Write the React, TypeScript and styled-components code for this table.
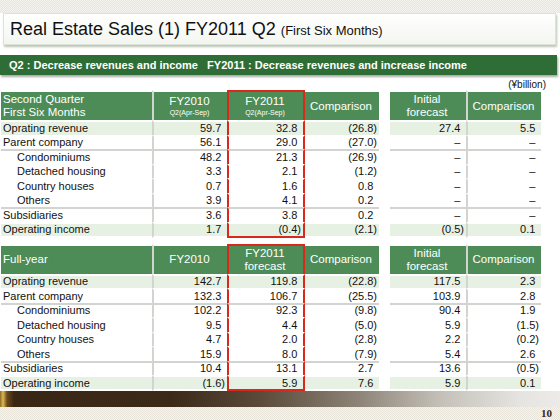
import React from "react";
import styled, { createGlobalStyle } from "styled-components";

const Global = createGlobalStyle`
  html, body { margin: 0; padding: 0; background: #fff; }
  body { font-family: "Liberation Sans", Arial, sans-serif; color: #111; }
`;

const Page = styled.div`
  width: 560px;
  height: 420px;
  overflow: hidden;
  display: flex;
  flex-direction: column;
  background: #fff;
`;

const Checker = styled.div<{ $h: number }>`
  height: ${(p) => p.$h}px;
  flex: none;
  background: repeating-conic-gradient(#e9e5da 0 25%, #f5f3ed 0 50%) 0 0 / 2px 2px;
  display: flex;
  justify-content: flex-end;
  align-items: center;
`;

const PageNum = styled.span`
  font-family: "Liberation Serif", "Times New Roman", serif;
  font-weight: bold;
  font-size: 11px;
  line-height: 11px;
  color: #3d2410;
  margin-right: 8px;
`;

const TitleBox = styled.div`
  margin: 0 4px 0 3px;
  height: 32px;
  flex: none;
  box-sizing: border-box;
  border: 1px solid #dde3d8;
  background: linear-gradient(#ffffff, #f3f6f0);
  box-shadow: 1px 2px 2px rgba(130, 150, 120, 0.55);
  display: flex;
  align-items: center;
  padding-left: 6px;
  gap: 5px;
`;

const TitleMain = styled.span`
  font-size: 18px;
  color: #111;
  transform-origin: left center;
`;

const TitleSub = styled.span`
  font-size: 13px;
  color: #111;
  margin-top: 3px;
`;

const GreenBar = styled.div`
  margin: 10px 3px 0 0;
  height: 20px;
  flex: none;
  background: #2f6d37;
  box-shadow: 1px 2px 2px rgba(110, 110, 110, 0.6);
  color: #fff;
  font-size: 11px;
  font-weight: bold;
  display: flex;
  align-items: center;
  padding-left: 9px;
`;

const Unit = styled.div`
  height: 15px;
  flex: none;
  font-size: 10px;
  text-align: right;
  padding-right: 14px;
  line-height: 20px;
`;

const Section = styled.div<{ $mt: number }>`
  display: flex;
  gap: 11px;
  margin-top: ${(p) => p.$mt}px;
  padding-left: 1px;
  flex: none;
`;

const Grid = styled.div<{ $cols: string }>`
  display: grid;
  grid-template-columns: ${(p) => p.$cols};
  grid-template-rows: 30px repeat(7, 14.5px) 16px;
`;

const GREY = "#d2d4d0";
const RED = "#d9291c";

const Cell = styled.div<{
  $head?: boolean;
  $green?: boolean;
  $left?: boolean;
  $indent?: boolean;
  $first?: boolean;
  $red?: boolean;
  $afterRed?: boolean;
  $lineTop?: boolean;
  $last?: boolean;
}>`
  box-sizing: border-box;
  background-clip: padding-box;
  background-color: ${(p) => (p.$head ? "#4e8c57" : p.$green ? "#e7f1e3" : "#fff")};
  color: ${(p) => (p.$head ? "#fff" : "#111")};
  font-size: ${(p) => (p.$head ? "11.5px" : "11px")};
  display: flex;
  flex-direction: column;
  justify-content: center;
  align-items: ${(p) => (p.$head ? (p.$left ? "flex-start" : "center") : p.$left ? "flex-start" : "flex-end")};
  text-align: ${(p) => (p.$head && !p.$left ? "center" : "left")};
  line-height: ${(p) => (p.$head ? "13px" : "13px")};
  padding: ${(p) => (p.$left ? (p.$indent ? "0 0 0 16px" : "0 0 0 2px") : "0 2px 0 0")};
  border-left: ${(p) => (p.$first || p.$afterRed ? "0" : `2px solid ${p.$red ? RED : GREY}`)};
  border-right: ${(p) => (p.$red ? `2px solid ${RED}` : "0")};
  border-top: 2px solid
    ${(p) => (p.$head ? (p.$red ? RED : "transparent") : p.$lineTop ? GREY : "transparent")};
  border-bottom: ${(p) => (p.$last ? `2px solid ${p.$red ? RED : "transparent"}` : "0")};
  white-space: nowrap;
`;

const SubHead = styled.span`
  font-size: 7px;
  line-height: 9px;
`;

const Ghost = styled.span`
  visibility: hidden;
`;

type Row = { label: string; indent?: boolean; green?: boolean; line?: boolean };

const rows: Row[] = [
  { label: "Oprating revenue", green: true },
  { label: "Parent company" },
  { label: "Condominiums", indent: true, line: true },
  { label: "Detached housing", indent: true },
  { label: "Country houses", indent: true },
  { label: "Others", indent: true },
  { label: "Subsidiaries", line: true },
  { label: "Operating income", green: true },
];

const Num = ({ v }: { v: string }) =>
  v.endsWith(")") ? (
    <span>{v}</span>
  ) : (
    <span>
      {v}
      <Ghost>)</Ghost>
    </span>
  );

type TableProps = {
  head: React.ReactNode[];
  cols: string;
  redCol?: number;
  data: string[][];
  labels?: boolean;
};

const Table = ({ head, cols, redCol = -1, data, labels }: TableProps) => {
  const cells: React.ReactNode[] = [];
  head.forEach((h, i) => {
    cells.push(
      <Cell
        key={`h${i}`}
        $head
        $left={labels && i === 0}
        $first={i === 0}
        $red={i === redCol}
        $afterRed={redCol >= 0 && i === redCol + 1}
      >
        {h}
      </Cell>
    );
  });
  rows.forEach((r, ri) => {
    const last = ri === rows.length - 1;
    if (labels) {
      cells.push(
        <Cell
          key={`l${ri}`}
          $left
          $first
          $indent={r.indent}
          $green={r.green}
          $lineTop={r.line}
          $last={last}
        >
          {r.label}
        </Cell>
      );
    }
    data[ri].forEach((v, ci) => {
      const col = labels ? ci + 1 : ci;
      cells.push(
        <Cell
          key={`c${ri}-${ci}`}
          $green={r.green}
          $lineTop={r.line}
          $first={col === 0}
          $red={col === redCol}
          $afterRed={redCol >= 0 && col === redCol + 1}
          $last={last}
        >
          <Num v={v} />
        </Cell>
      );
    });
  });
  return <Grid $cols={cols}>{cells}</Grid>;
};

const D = "–";

const q2Left = [
  ["59.7", "32.8", "(26.8)"],
  ["56.1", "29.0", "(27.0)"],
  ["48.2", "21.3", "(26.9)"],
  ["3.3", "2.1", "(1.2)"],
  ["0.7", "1.6", "0.8"],
  ["3.9", "4.1", "0.2"],
  ["3.6", "3.8", "0.2"],
  ["1.7", "(0.4)", "(2.1)"],
];
const q2Right = [
  ["27.4", "5.5"],
  [D, D],
  [D, D],
  [D, D],
  [D, D],
  [D, D],
  [D, D],
  ["(0.5)", "0.1"],
];
const fyLeft = [
  ["142.7", "119.8", "(22.8)"],
  ["132.3", "106.7", "(25.5)"],
  ["102.2", "92.3", "(9.8)"],
  ["9.5", "4.4", "(5.0)"],
  ["4.7", "2.0", "(2.8)"],
  ["15.9", "8.0", "(7.9)"],
  ["10.4", "13.1", "2.7"],
  ["(1.6)", "5.9", "7.6"],
];
const fyRight = [
  ["117.5", "2.3"],
  ["103.9", "2.8"],
  ["90.4", "1.9"],
  ["5.9", "(1.5)"],
  ["2.2", "(0.2)"],
  ["5.4", "2.6"],
  ["13.6", "(0.5)"],
  ["5.9", "0.1"],
];

const LEFT_COLS = "151px 75px 78px 74px";
const RIGHT_COLS = "76px 75px";

const BottomBar = styled.div`
  height: 16px;
  flex: none;
  background: linear-gradient(
    90deg,
    #8a6a2a 0px,
    #e0b850 3px,
    #6a4a1c 7px,
    #3a2614 14px,
    #3c2a18 170px,
    #5a4a3a 260px,
    #8e8578 360px,
    #c4c0b8 440px,
    #e6e4e0 520px,
    #ecebe8 560px
  );
`;

const Spacer = styled.div`
  flex: 1;
`;

const forecastHead = (
  <>
    <span>Initial</span>
    <span>forecast</span>
  </>
);

export default function App() {
  return (
    <>
      <Global />
      <Page>
        <Checker $h={13} />
        <TitleBox>
          <TitleMain>Real Estate Sales (1) FY2011 Q2</TitleMain>
          <TitleSub>(First Six Months)</TitleSub>
        </TitleBox>
        <GreenBar>
          Q2 : Decrease revenues and income&nbsp;&nbsp;&nbsp;FY2011 : Decrease revenues and increase income
        </GreenBar>
        <Unit>(¥billion)</Unit>
        <Section $mt={0}>
          <Table
            labels
            cols={LEFT_COLS}
            redCol={2}
            head={[
              <>
                <span>Second Quarter</span>
                <span>First Six Months</span>
              </>,
              <>
                <span>FY2010</span>
                <SubHead>Q2(Apr-Sep)</SubHead>
              </>,
              <>
                <span>FY2011</span>
                <SubHead>Q2(Apr-Sep)</SubHead>
              </>,
              "Comparison",
            ]}
            data={q2Left}
          />
          <Table cols={RIGHT_COLS} head={[forecastHead, "Comparison"]} data={q2Right} />
        </Section>
        <Section $mt={6}>
          <Table
            labels
            cols={LEFT_COLS}
            redCol={2}
            head={[
              "Full-year",
              "FY2010",
              <>
                <span>FY2011</span>
                <span>forecast</span>
              </>,
              "Comparison",
            ]}
            data={fyLeft}
          />
          <Table cols={RIGHT_COLS} head={[forecastHead, "Comparison"]} data={fyRight} />
        </Section>
        <Spacer />
        <BottomBar />
        <Checker $h={13}>
          <PageNum>10</PageNum>
        </Checker>
      </Page>
    </>
  );
}
